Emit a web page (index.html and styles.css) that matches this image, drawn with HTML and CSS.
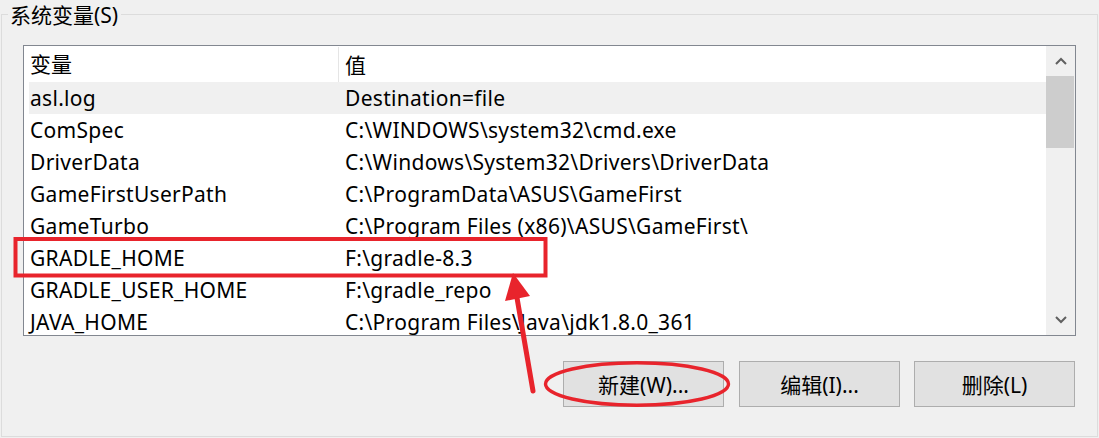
FILE: index.html
```html
<!DOCTYPE html>
<html lang="zh-CN">
<head>
<meta charset="utf-8">
<title>系统变量</title>
<link rel="stylesheet" href="styles.css">
</head>
<body>
<div class="group">
  <div class="group-title">系统变量(S)</div>
  <div class="listbox">
    <div class="list-content">
      <div class="list-header">
        <div class="col col-name">变量</div>
        <div class="col col-value">值</div>
      </div>
      <div class="row row-hl"><div class="col col-name">asl.log</div><div class="col col-value">Destination=file</div></div>
      <div class="row"><div class="col col-name">ComSpec</div><div class="col col-value">C:\WINDOWS\system32\cmd.exe</div></div>
      <div class="row"><div class="col col-name">DriverData</div><div class="col col-value">C:\Windows\System32\Drivers\DriverData</div></div>
      <div class="row"><div class="col col-name">GameFirstUserPath</div><div class="col col-value">C:\ProgramData\ASUS\GameFirst</div></div>
      <div class="row"><div class="col col-name">GameTurbo</div><div class="col col-value">C:\Program Files (x86)\ASUS\GameFirst\</div></div>
      <div class="row"><div class="col col-name">GRADLE_HOME</div><div class="col col-value">F:\gradle-8.3</div></div>
      <div class="row"><div class="col col-name">GRADLE_USER_HOME</div><div class="col col-value">F:\gradle_repo</div></div>
      <div class="row"><div class="col col-name">JAVA_HOME</div><div class="col col-value">C:\Program Files\Java\jdk1.8.0_361</div></div>
    </div>
    <div class="scrollbar">
      <div class="sb-btn">
        <svg width="12" height="8" viewBox="0 0 12 8"><path d="M1 7 L6 2 L11 7" fill="none" stroke="#606060" stroke-width="2"/></svg>
      </div>
      <div class="sb-thumb"></div>
      <div class="sb-track"></div>
      <div class="sb-btn">
        <svg width="12" height="8" viewBox="0 0 12 8"><path d="M1 1 L6 6 L11 1" fill="none" stroke="#606060" stroke-width="2"/></svg>
      </div>
    </div>
  </div>
  <div class="buttons">
    <button class="btn btn-first">新建(W)...</button>
    <button class="btn">编辑(I)...</button>
    <button class="btn">删除(L)</button>
  </div>
</div>
<svg class="annot" width="1099" height="438" viewBox="0 0 1099 438">
  <rect x="15.5" y="239" width="530" height="36.5" fill="none" stroke="#e8242c" stroke-width="4"/>
  <line x1="533" y1="391" x2="516" y2="292" stroke="#e8242c" stroke-width="5" stroke-linecap="round"/>
  <polygon points="513,273 505,301 530,296" fill="#e8242c"/>
  <ellipse cx="637" cy="384" rx="91.5" ry="21.2" fill="none" stroke="#e8242c" stroke-width="3.4"/>
</svg>
</body>
</html>
```
FILE: styles.css
```css
html, body {
  margin: 0;
  padding: 0;
  background: #f0f0f0;
}
body {
  width: 1099px;
  height: 438px;
  overflow: hidden;
  position: relative;
  font-family: "Noto Sans", "Noto Sans CJK SC", sans-serif;
  font-size: 21px;
  letter-spacing: 0.3px;
  color: #000;
}
.group {
  box-sizing: border-box;
  margin: 14px 0 0 1px;
  width: 1097px;
  height: 423px;
  border: 1px solid #dcdcdc;
}
.group-title {
  width: fit-content;
  margin: -15px 0 0 6px;
  padding: 0 3px 0 2px;
  height: 30px;
  line-height: 30px;
  background: #f0f0f0;
  letter-spacing: 0;
}
.listbox {
  box-sizing: border-box;
  margin: 15px 21px 0 21px;
  height: 291px;
  border: 1px solid #828790;
  background: #fff;
  display: flex;
  overflow: hidden;
}
.list-content {
  flex: 1;
  padding-left: 5px;
  overflow: hidden;
}
.list-header {
  display: flex;
  height: 36px;
  align-items: center;
  background: #fff;
}
.list-header .col-name {
  border-right: 1px solid #e5e5e5;
  height: 35px;
  line-height: 35px;
}
.list-header .col {
  letter-spacing: 0;
}
.row {
  display: flex;
  height: 32px;
  line-height: 32px;
  white-space: nowrap;
}
.row-hl {
  background: #f0f0f0;
}
.col-name {
  box-sizing: border-box;
  width: 310px;
  padding-left: 1px;
  flex: none;
}
.col-value {
  padding-left: 6px;
}
.scrollbar {
  width: 29px;
  flex: none;
  background: #f0f0f0;
  display: flex;
  flex-direction: column;
}
.sb-btn {
  height: 30px;
  display: flex;
  align-items: center;
  justify-content: center;
  flex: none;
}
.sb-thumb {
  height: 72px;
  background: #cdcdcd;
  margin: 0 1px 0 0;
  flex: none;
}
.sb-track {
  flex: 1;
}
.buttons {
  display: flex;
  justify-content: flex-end;
  gap: 14px;
  margin-top: 25px;
  padding-right: 22px;
}
.btn {
  box-sizing: border-box;
  width: 161px;
  height: 46px;
  background: #e1e1e1;
  border: 1px solid #adadad;
  font-family: "Noto Sans", "Noto Sans CJK SC", sans-serif;
  font-size: 21px;
  color: #000;
  padding: 0;
}
.btn-first {
  margin-right: 1px;
}
.annot {
  position: absolute;
  left: 0;
  top: 0;
  pointer-events: none;
}
```
